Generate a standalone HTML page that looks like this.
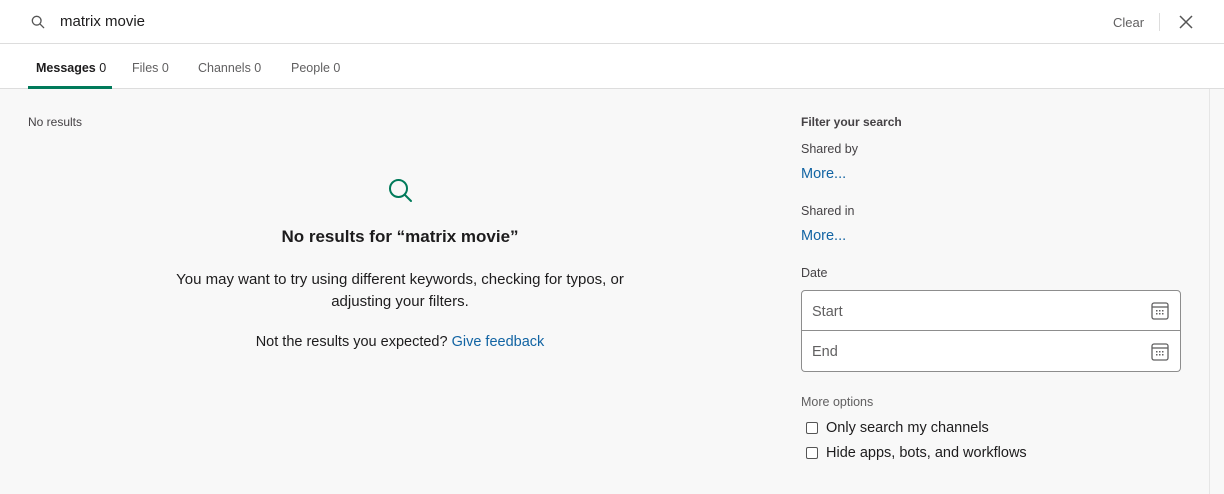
<!DOCTYPE html>
<html><head><style>
*{box-sizing:border-box;margin:0;padding:0}
body{width:1224px;height:494px;overflow:hidden;font-family:"Liberation Sans",sans-serif;color:#1d1c1d;background:#fff;position:relative}
.abs{position:absolute;white-space:nowrap}
.top{position:absolute;left:0;top:0;width:1224px;height:44px;border-bottom:1px solid #ddd;background:#fff}
.tabs{position:absolute;left:0;top:44px;width:1224px;height:45px;border-bottom:1px solid #ddd;background:#fff}
.main{position:absolute;left:0;top:89px;width:1224px;height:405px;background:#f8f8f8}
.sb{position:absolute;left:1209px;top:89px;width:15px;height:405px;border-left:1px solid #e6e6e6;background:#f8f8f8}
.tab{font-size:12.5px;color:#616061}
.box{position:absolute;left:801px;width:380px;height:41px;background:#fff;border:1px solid #8d8d8d}
.cb{position:absolute;width:12px;height:12px;border:1px solid #555;border-radius:2px;background:#fff}
a{color:#1264a3;text-decoration:none}
</style></head><body>
<div class="top">
<svg class="abs" style="left:31px;top:15px" width="14" height="14" viewBox="0 0 16 16"><circle cx="6.5" cy="6.5" r="5" fill="none" stroke="#555" stroke-width="1.5"/><path d="M10.2 10.2L14.5 14.5" stroke="#555" stroke-width="1.5" stroke-linecap="round"/></svg>
<div class="abs" style="left:60px;top:13px;font-size:15px">matrix movie</div>
<div class="abs" style="left:1113px;top:15px;font-size:13px;color:#616061">Clear</div>
<div class="abs" style="left:1159px;top:13px;width:1px;height:18px;background:#ddd"></div>
<svg class="abs" style="left:1179px;top:15px" width="14" height="14" viewBox="0 0 14 14"><path d="M1 1L13 13M13 1L1 13" stroke="#555" stroke-width="1.5"/></svg>
</div>
<div class="tabs">
<div class="abs tab" style="left:36px;top:17px;color:#1d1c1d;font-weight:bold">Messages <span style="font-weight:normal">0</span></div>
<div class="abs tab" style="left:132px;top:17px">Files 0</div>
<div class="abs tab" style="left:198px;top:17px">Channels 0</div>
<div class="abs tab" style="left:291px;top:17px">People 0</div>
<div class="abs" style="left:28px;top:42px;width:84px;height:3px;background:#007a5a"></div>
</div>
<div class="main">
<div class="abs" style="left:28px;top:26px;font-size:12px;color:#454245">No results</div>
<svg class="abs" style="left:387px;top:88px" width="28" height="28" viewBox="0 0 28 28"><circle cx="11.5" cy="11.5" r="8.5" fill="none" stroke="#007a5a" stroke-width="2"/><path d="M18 18L24 24" stroke="#007a5a" stroke-width="2" stroke-linecap="round"/></svg>
<div class="abs" style="left:0;width:800px;text-align:center;top:138px;font-size:17px;font-weight:bold">No results for “matrix movie”</div>
<div class="abs" style="left:0;width:800px;text-align:center;top:180px;font-size:15px;line-height:22px;white-space:normal">You may want to try using different keywords, checking for typos, or<br>adjusting your filters.</div>
<div class="abs" style="left:0;width:800px;text-align:center;top:245px;font-size:14.5px">Not the results you expected? <a>Give feedback</a></div>
<div class="abs" style="left:801px;top:26px;font-size:12px;font-weight:bold;color:#454245">Filter your search</div>
<div class="abs" style="left:801px;top:53px;font-size:12.5px;color:#454245">Shared by</div>
<div class="abs" style="left:801px;top:77px;font-size:14.5px"><a>More...</a></div>
<div class="abs" style="left:801px;top:115px;font-size:12.5px;color:#454245">Shared in</div>
<div class="abs" style="left:801px;top:139px;font-size:14.5px"><a>More...</a></div>
<div class="abs" style="left:801px;top:177px;font-size:12.5px;color:#454245">Date</div>
</div>
<div class="box" style="top:290px;border-radius:4px 4px 0 0"><span class="abs" style="left:10px;top:13px;font-size:14.5px;color:#616061">Start</span></div>
<div class="box" style="top:331px;border-radius:0 0 4px 4px;border-top:none"><span class="abs" style="left:10px;top:13px;font-size:14.5px;color:#616061">End</span></div>
<svg class="abs" style="left:1151px;top:302px" width="18" height="18" viewBox="0 0 18 18"><rect x="1" y="1" width="16" height="16" rx="2" fill="none" stroke="#616061" stroke-width="1.3"/><path d="M1 5H17" stroke="#616061" stroke-width="1.3"/><g fill="#616061"><rect x="5" y="8" width="1.5" height="1.5"/><rect x="8" y="8" width="1.5" height="1.5"/><rect x="11" y="8" width="1.5" height="1.5"/><rect x="5" y="11" width="1.5" height="1.5"/><rect x="8" y="11" width="1.5" height="1.5"/><rect x="11" y="11" width="1.5" height="1.5"/></g></svg>
<svg class="abs" style="left:1151px;top:343px" width="18" height="18" viewBox="0 0 18 18"><rect x="1" y="1" width="16" height="16" rx="2" fill="none" stroke="#616061" stroke-width="1.3"/><path d="M1 5H17" stroke="#616061" stroke-width="1.3"/><g fill="#616061"><rect x="5" y="8" width="1.5" height="1.5"/><rect x="8" y="8" width="1.5" height="1.5"/><rect x="11" y="8" width="1.5" height="1.5"/><rect x="5" y="11" width="1.5" height="1.5"/><rect x="8" y="11" width="1.5" height="1.5"/><rect x="11" y="11" width="1.5" height="1.5"/></g></svg>
<div class="abs" style="left:801px;top:395px;font-size:12.5px;color:#616061">More options</div>
<div class="cb" style="left:806px;top:422px"></div>
<div class="abs" style="left:826px;top:420px;font-size:14.5px">Only search my channels</div>
<div class="cb" style="left:806px;top:447px"></div>
<div class="abs" style="left:826px;top:445px;font-size:14.5px">Hide apps, bots, and workflows</div>
<div class="sb"></div>
</body></html>
